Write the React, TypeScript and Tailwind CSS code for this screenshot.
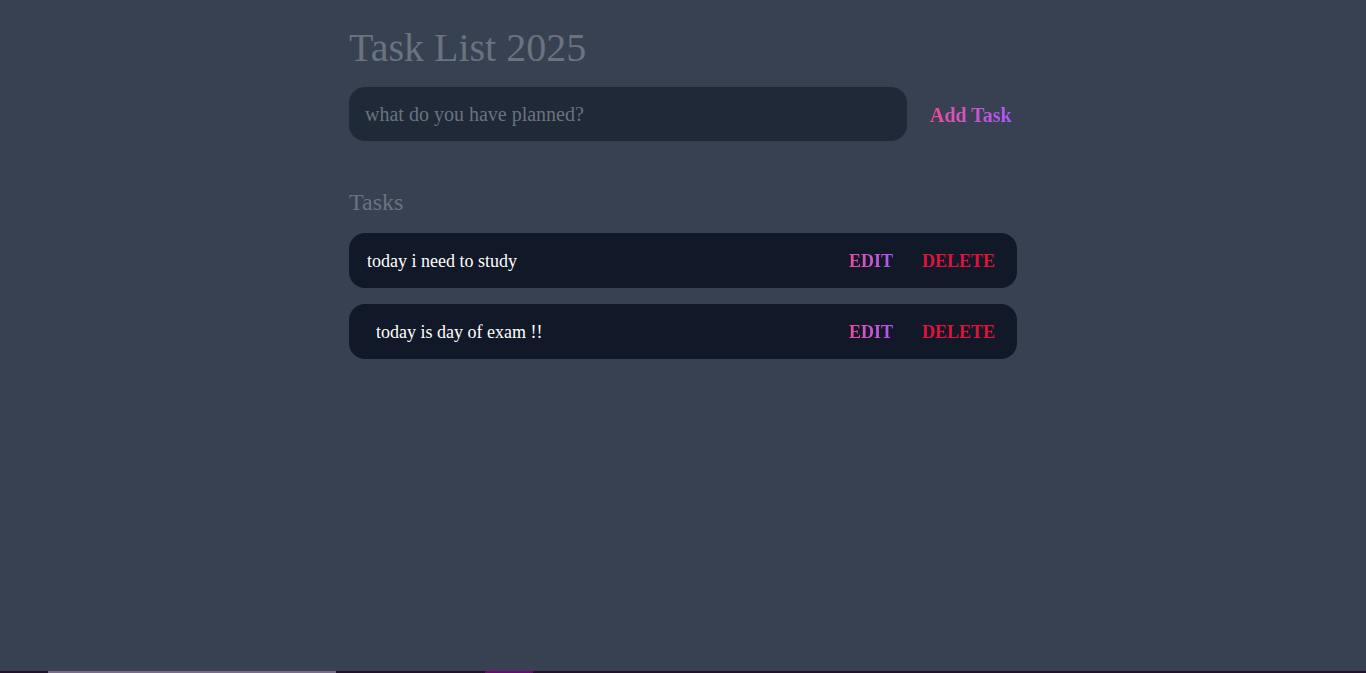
import { useState } from 'react'

interface Task {
  id: number
  text: string
}

const initialTasks: Task[] = [
  { id: 1, text: 'today i need to study' },
  { id: 2, text: '  today is day of exam !!' },
]

export default function App() {
  const [tasks, setTasks] = useState<Task[]>(initialTasks)
  const [draft, setDraft] = useState('')

  const addTask = () => {
    if (!draft.trim()) return
    setTasks((prev) => [...prev, { id: Date.now(), text: draft }])
    setDraft('')
  }

  return (
    <div
      className="flex h-screen flex-col bg-[#374151]"
      style={{ fontFamily: '"Liberation Serif", "Times New Roman", serif' }}
    >
      <main className="flex-1">
        <div className="mx-auto w-[668px] pt-[28px]">
          <h1 className="text-[40px] leading-[40px] text-[#6b7280]">Task List 2025</h1>

          <div className="mt-[19px] flex items-center">
            <input
              value={draft}
              onChange={(e) => setDraft(e.target.value)}
              placeholder="what do you have planned?"
              className="h-[54px] w-[558px] rounded-2xl bg-[#1f2937] px-4 pt-[1px] text-xl text-white outline-none placeholder:text-[#6b7280]"
            />
            <button
              onClick={addTask}
              className="ml-[23px] mt-[2px] bg-gradient-to-r from-[#ec4899] to-[#a855f7] bg-clip-text text-xl font-bold text-transparent"
            >
              Add Task
            </button>
          </div>

          <h2 className="mt-[49px] text-2xl leading-6 text-[#6b7280]">Tasks</h2>

          <ul className="mt-[19px] flex flex-col gap-4">
            {tasks.map((task) => (
              <li
                key={task.id}
                className="flex h-[55px] items-center rounded-2xl bg-[#111827] pl-[18px] pr-[22px]"
              >
                <span className="flex-1 whitespace-pre text-lg text-white">{task.text}</span>
                <button className="ml-[1px] bg-gradient-to-r from-[#ec4899] to-[#a855f7] bg-clip-text text-lg font-bold text-transparent">
                  EDIT
                </button>
                <button
                  onClick={() => setTasks((prev) => prev.filter((t) => t.id !== task.id))}
                  className="ml-[29px] text-lg font-bold text-[#dc143c]"
                >
                  DELETE
                </button>
              </li>
            ))}
          </ul>
        </div>
      </main>

      <div className="flex h-[2px] bg-[#24102a]">
        <div className="ml-[48px] w-[288px] bg-[#7a6a88]" />
        <div className="ml-[149px] w-[48px] bg-[#6a0a6e]" />
      </div>
    </div>
  )
}
